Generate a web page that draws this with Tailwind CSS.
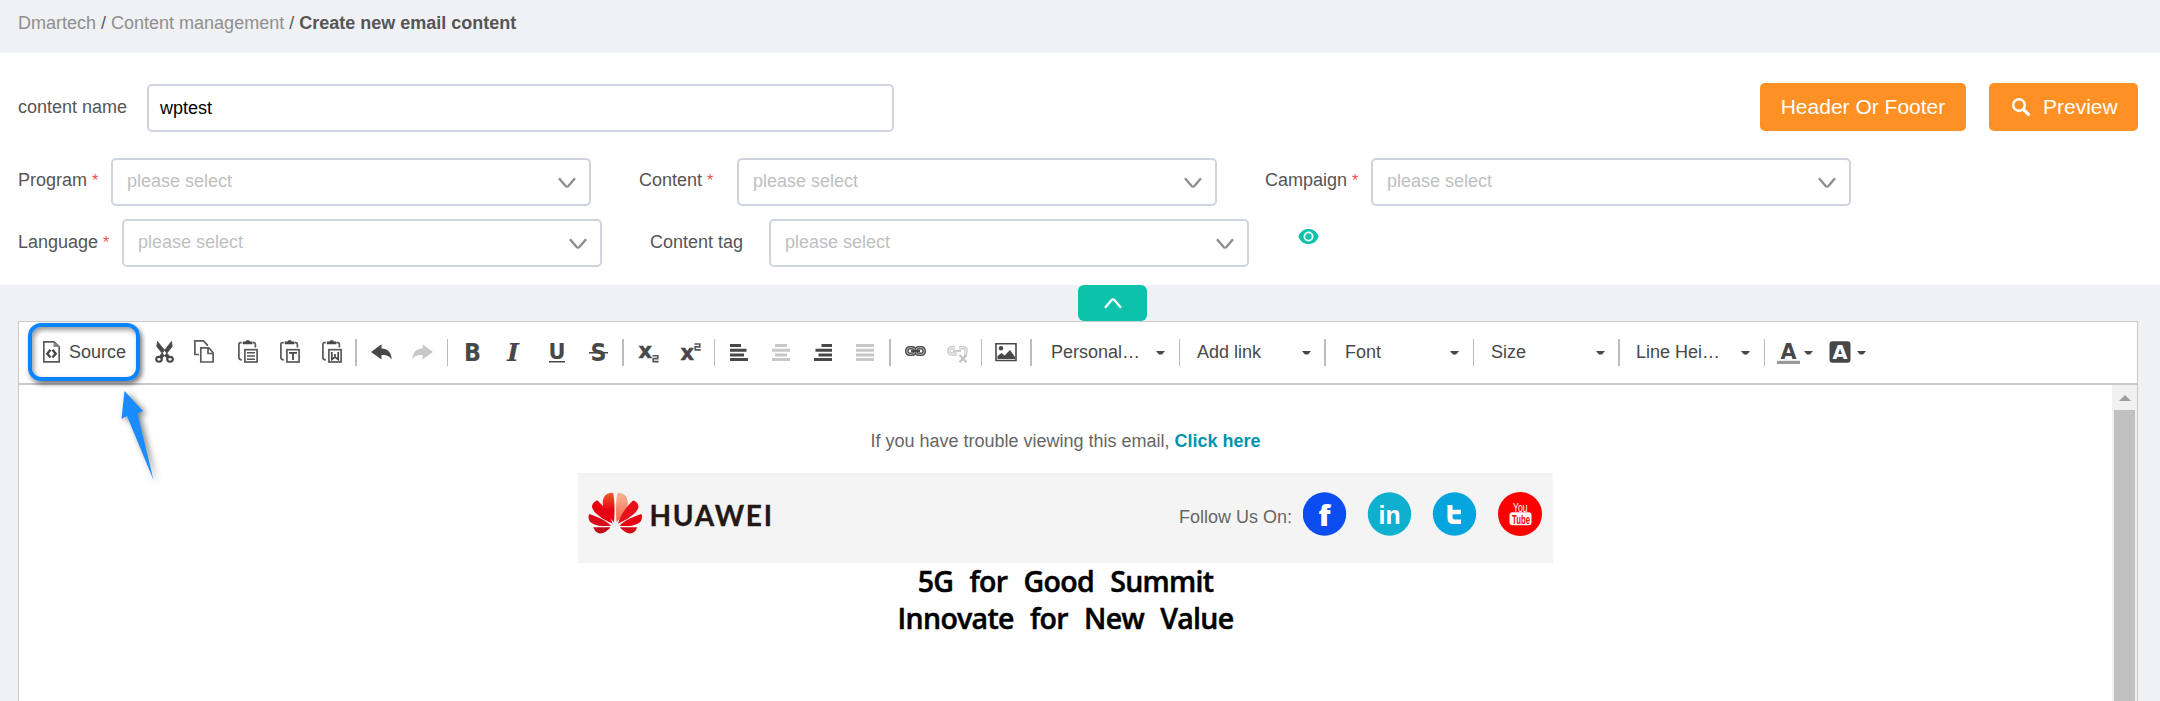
<!DOCTYPE html>
<html lang="en">
<head>
<meta charset="utf-8">
<title>Create new email content</title>
<script src="https://cdn.jsdelivr.net/npm/@tailwindcss/browser@4"></script>
</head>
<body class="relative h-[701px] w-[2160px] overflow-hidden bg-[#f0f1f5] font-['Liberation_Sans',Arial,sans-serif] text-[18px] leading-6 text-[#555]">
<svg class="hidden">
  <symbol id="chev" viewBox="0 0 18 11"><path d="M1 1.200 7.400 8.800Q9 10.600 10.600 8.800L17 1.200" fill="none" stroke="currentColor" stroke-width="2.300"/></symbol>
  <symbol id="tri" viewBox="0 0 9 24"><path d="M0 11h9L6 14.500H3z" fill="#484848"/></symbol>
  <symbol id="clip" viewBox="0 0 20 24"><g fill="none" stroke="#5a5a5a" stroke-width="1.700"><path d="M3.800 2.700H2.600Q.9 2.700.9 4.500V17.500Q.9 19.800 3.800 19.800M14.500 2.700h1.200Q17.400 2.700 17.400 4.500V7.500"/><rect x="6.900" y="9.700" width="12.200" height="12.300"/></g><path d="M4.800 4.300V1.500h2.700L8.500.2h2.500l1 1.300h2.300v2.800z" fill="#484848"/></symbol>
</svg>

<header class="h-[53px] pt-[11px] pl-[18px] whitespace-nowrap"><span class="text-[#8f8f8f]">Dmartech</span> / <span class="text-[#8f8f8f]">Content management</span> / <b>Create new email content</b></header>

<section class="h-[232px] bg-white pt-[30px] pr-[22px] pl-[18px]">
  <div class="flex h-[49px] items-start">
    <label class="mt-3 w-[129px]">content name</label>
    <div class="mt-px h-[48px] w-[747px] rounded-[5px] border-2 border-[#d0d4e0] pt-[10px] pl-[11px] text-black">wptest</div>
    <div class="ml-auto flex gap-[23px] text-[21px] text-white">
      <button class="h-[48px] w-[206px] rounded-[5px] bg-[#ff9124]">Header Or Footer</button>
      <button class="flex h-[48px] w-[149px] items-center rounded-[5px] bg-[#ff9124] pl-[22px]"><svg class="mr-[12px] h-5 w-5" viewBox="0 0 20 20" fill="none" stroke="white"><circle cx="8" cy="8" r="5.800" stroke-width="2.400"/><path d="m12.500 12.500 5 4.800" stroke-width="3.200" stroke-linecap="round"/></svg>Preview</button>
    </div>
  </div>
  <div class="mt-[26px] flex h-[48px]">
    <label class="w-[93px] pt-[10px]">Program <sup class="relative top-0 align-baseline text-[16px] leading-none text-[#f0524a]">*</sup></label>
    <div class="flex w-[480px] items-center justify-between rounded-[5px] border-2 border-[#d0d4e0] pr-[13px] pb-[2px] pl-[14px] text-[#bfbfbf]">please select<svg class="relative top-px h-[11px] w-[18px] text-[#8c8c8c]"><use href="#chev"/></svg></div>
    <label class="ml-[48px] w-[98px] pt-[10px]">Content <sup class="relative top-0 align-baseline text-[16px] leading-none text-[#f0524a]">*</sup></label>
    <div class="flex w-[480px] items-center justify-between rounded-[5px] border-2 border-[#d0d4e0] pr-[13px] pb-[2px] pl-[14px] text-[#bfbfbf]">please select<svg class="relative top-px h-[11px] w-[18px] text-[#8c8c8c]"><use href="#chev"/></svg></div>
    <label class="ml-[48px] w-[106px] pt-[10px]">Campaign <sup class="relative top-0 align-baseline text-[16px] leading-none text-[#f0524a]">*</sup></label>
    <div class="flex w-[480px] items-center justify-between rounded-[5px] border-2 border-[#d0d4e0] pr-[13px] pb-[2px] pl-[14px] text-[#bfbfbf]">please select<svg class="relative top-px h-[11px] w-[18px] text-[#8c8c8c]"><use href="#chev"/></svg></div>
  </div>
  <div class="mt-[13px] flex h-[48px]">
    <label class="w-[104px] pt-[11px]">Language <sup class="relative top-0 align-baseline text-[16px] leading-none text-[#f0524a]">*</sup></label>
    <div class="flex w-[480px] items-center justify-between rounded-[5px] border-2 border-[#d0d4e0] pr-[13px] pb-[2px] pl-[14px] text-[#bfbfbf]">please select<svg class="relative top-px h-[11px] w-[18px] text-[#8c8c8c]"><use href="#chev"/></svg></div>
    <label class="ml-[48px] w-[119px] pt-[11px]">Content tag</label>
    <div class="flex w-[480px] items-center justify-between rounded-[5px] border-2 border-[#d0d4e0] pr-[13px] pb-[2px] pl-[14px] text-[#bfbfbf]">please select<svg class="relative top-px h-[11px] w-[18px] text-[#8c8c8c]"><use href="#chev"/></svg></div>
    <svg class="mt-[10px] ml-[49px] h-[15px] w-[21px]" viewBox="0 0 21 15"><path d="M.5 7.500C2 2.500 6 0 10.500 0s8.500 2.500 10 7.500C19 12.500 15 15 10.500 15S2 12.500.5 7.500" fill="#0dc2aa"/><circle cx="10.500" cy="7.500" r="4.100" fill="none" stroke="white" stroke-width="1.800"/></svg>
  </div>
</section>

<div class="flex h-[36px] pl-[1078px]"><button class="flex w-[69px] items-center justify-center rounded-[6px] bg-[#0dc2aa] text-white"><svg class="h-[11px] w-[18px] rotate-180"><use href="#chev"/></svg></button></div>

<main class="ml-[18px] h-[400px] w-[2120px] border border-[#c9c9c9] bg-white">
  <div class="flex h-[63px] items-start border-b-2 border-[#c9c9c9] pt-[18px] whitespace-nowrap text-[#484848]">
    <svg class="ml-[24px] h-6 w-[17px] shrink-0" viewBox="0 0 17 24"><path d="M.8 1.900H11L16.200 7V21.900H.8z" fill="none" stroke="#5a5a5a" stroke-width="1.700"/><path d="M10.500 1.500v5.500h6z" fill="#888"/><path d="M7.500 9.800 4.300 13.700l3.200 3.900M9.500 9.800l3.200 3.900-3.200 3.900" fill="none" stroke="#484848" stroke-width="2.400"/></svg>
    <span class="ml-[9px] w-[57px]">Source</span>
    <svg class="ml-[29px] h-6 w-[19px] shrink-0" viewBox="0 0 19 24"><path d="M2.500 1.500 1.800 6.500l6 7.500L12.500 18.500l2.500-1.500L8.500 9zM16.500 1.500l.7 5-6 7.500L6.500 18.500 4 17l6.500-8z" fill="#484848" stroke="#484848" stroke-width=".8"/><g fill="none" stroke="#484848" stroke-width="2.100"><ellipse cx="4" cy="19.300" rx="2.800" ry="2.400"/><ellipse cx="15" cy="19.300" rx="2.800" ry="2.400"/></g></svg>
    <svg class="ml-[20px] h-6 w-[20px] shrink-0" viewBox="0 0 20 24" fill="none" stroke="#5a5a5a" stroke-width="1.700"><path d="M5 14.500H.9V.9H9.500l3.700 4v1"/><path d="M6.800 7.800h8l4.300 5v9.200H6.800zM14 8v5.500h5"/></svg>
    <svg class="ml-[24px] h-6 w-[20px] shrink-0"><use href="#clip"/><path d="M9 12.800h8M9 16h8M9 19.200h8" stroke="#555" stroke-width="1.500"/></svg>
    <svg class="ml-[22px] h-6 w-[20px] shrink-0"><use href="#clip"/><path d="M9 12.900h8M13 12.500v7.500" stroke="#484848" stroke-width="1.800"/></svg>
    <svg class="ml-[22px] h-6 w-[20px] shrink-0"><use href="#clip"/><path d="M9.800 12v7.500l3.200-2.500 3.200 2.500V12M13 14v3" fill="none" stroke="#484848" stroke-width="1.700"/></svg>
    <i class="mt-[-1px] ml-[13px] h-[27px] w-[2px] bg-[#bcbcbc]"></i>
    <svg class="ml-[14px] h-6 w-[21px] shrink-0" viewBox="0 0 21 24"><path d="M0 12 10.500 4.200V8.500C17 8.500 20.500 13 20.800 19.500 18 15.500 15 14.800 10.500 15v4.500z" fill="#484848"/></svg>
    <svg class="ml-[20px] h-6 w-[21px] shrink-0" viewBox="0 0 21 24"><path d="M21 12 10.500 4.200V8.500C4 8.500.5 13 .2 19.500 3 15.500 6 14.800 10.500 15v4.500z" fill="#c8c8c8"/></svg>
    <i class="mt-[-1px] ml-[14px] h-[27px] w-px bg-[#bcbcbc]"></i>
    <svg class="ml-[17px] h-6 w-[15px] shrink-0 overflow-visible" fill="#484848"><text x="-1" y="21" textLength="17" lengthAdjust="spacingAndGlyphs" font-family="DejaVu Sans" font-weight="700" font-size="24.500">B</text></svg>
    <svg class="ml-[27px] h-6 w-[13px] shrink-0 overflow-visible" fill="#484848"><text x="0" y="21" textLength="12" lengthAdjust="spacingAndGlyphs" font-family="DejaVu Serif" font-weight="700" font-style="italic" font-size="24.500">I</text></svg>
    <svg class="ml-[29px] h-6 w-[16px] shrink-0 overflow-visible" fill="#484848"><text x="-.5" y="18.800" textLength="17" lengthAdjust="spacingAndGlyphs" font-family="DejaVu Sans" font-weight="700" font-size="21.500">U</text><path d="M0 21h16v1.500H0z"/></svg>
    <svg class="ml-[24px] h-6 w-[19px] shrink-0 overflow-visible" fill="#484848"><text x="1.500" y="21" textLength="16" lengthAdjust="spacingAndGlyphs" font-family="DejaVu Sans" font-weight="700" font-size="24">S</text><path d="M0 12h19v1.500H0z"/></svg>
    <i class="mt-[-1px] ml-[14px] h-[27px] w-[2px] bg-[#bcbcbc]"></i>
    <svg class="ml-[15px] h-6 w-[20px] shrink-0 overflow-visible" fill="#484848"><text x="-.5" y="18" font-family="DejaVu Sans" font-weight="700" font-size="22" textLength="13.500" lengthAdjust="spacingAndGlyphs" stroke="#484848" stroke-width=".5">x</text><path d="M13.500 15.700h5.300v2.900h-4.600v3h5.500" fill="none" stroke="#555" stroke-width="1.600"/></svg>
    <svg class="ml-[22px] h-6 w-[20px] shrink-0 overflow-visible" fill="#484848"><text x="-.5" y="20" font-family="DejaVu Sans" font-weight="700" font-size="22" textLength="13.500" lengthAdjust="spacingAndGlyphs" stroke="#484848" stroke-width=".5">x</text><path d="M13.500 4h5.300v2.900h-4.600v3h5.500" fill="none" stroke="#555" stroke-width="1.600"/></svg>
    <i class="mt-[-1px] ml-[13px] h-[27px] w-px bg-[#bcbcbc]"></i>
    <svg class="ml-[15px] h-6 w-[18px] shrink-0" stroke="#484848" stroke-width="3"><path d="M0 5.500h11M0 10.200h16.500M0 14.900h14M0 19.600h18"/></svg>
    <svg class="ml-[24px] h-6 w-[18px] shrink-0" stroke="#c8c8c8" stroke-width="3"><path d="M3 5.500h12M0 10.200h18M3 14.900h12M0 19.600h18"/></svg>
    <svg class="ml-[24px] h-6 w-[18px] shrink-0" stroke="#484848" stroke-width="3"><path d="M7.500 5.500h11M1.500 10.200h17M4.500 14.900h14M0 19.600h18"/></svg>
    <svg class="ml-[24px] h-6 w-[18px] shrink-0" stroke="#c8c8c8" stroke-width="3"><path d="M0 5.500h18M0 10.200h18M0 14.900h18M0 19.600h18"/></svg>
    <i class="mt-[-1px] ml-[15px] h-[27px] w-[2px] bg-[#bcbcbc]"></i>
    <svg class="ml-[14px] h-6 w-[21px] shrink-0" fill="none"><g stroke="#484848" stroke-width="3.600"><rect x="1.900" y="7.700" width="8" height="6.600" rx="2.500"/><rect x="11.100" y="7.700" width="8" height="6.600" rx="2.500"/></g><g stroke="#ccc" stroke-width=".9"><rect x="1.900" y="7.700" width="8" height="6.600" rx="2.500"/><rect x="11.100" y="7.700" width="8" height="6.600" rx="2.500"/></g><path d="M6 11h9" stroke="#484848" stroke-width="2.400"/></svg>
    <svg class="ml-[21px] h-6 w-[21px] shrink-0" fill="none"><g stroke="#ccc" stroke-width="3.400"><path d="M10 14H4.400Q1.900 14 1.900 11T4.400 7.700H8M12 7.700h4.600Q19.100 7.700 19.100 11T17 14"/></g><g stroke="#f5f5f5" stroke-width=".9"><path d="M10 14H4.400Q1.900 14 1.900 11T4.400 7.700H8M12 7.700h4.600Q19.100 7.700 19.100 11T17 14"/></g><path d="M6 11h8" stroke="#ccc" stroke-width="2"/><path d="m12.500 15 7 7.300M19.500 15l-7 7.300" stroke="#c2c2c2" stroke-width="2.200"/></svg>
    <i class="mt-[-1px] ml-[13px] h-[27px] w-px bg-[#bcbcbc]"></i>
    <svg class="ml-[13px] h-6 w-[22px] shrink-0" fill="#484848"><path d="M1 3.800h20v16.700H1z" fill="none" stroke="#484848" stroke-width="1.600"/><circle cx="6" cy="8.300" r="2.200"/><path d="M2.500 19v-3L6.500 13l3 2.500L15 10l5 7v2z"/></svg>
    <i class="mt-[-1px] ml-[13px] h-[27px] w-[2px] bg-[#bcbcbc]"></i>
    <span class="ml-[19px] w-[105px]">Personal…</span><svg class="h-6 w-[9px]"><use href="#tri"/></svg>
    <i class="mt-[-1px] ml-[14px] h-[27px] w-px bg-[#bcbcbc]"></i>
    <span class="ml-[17px] w-[105px]">Add link</span><svg class="h-6 w-[9px]"><use href="#tri"/></svg>
    <i class="mt-[-1px] ml-[13px] h-[27px] w-[2px] bg-[#bcbcbc]"></i>
    <span class="ml-[19px] w-[105px]">Font</span><svg class="h-6 w-[9px]"><use href="#tri"/></svg>
    <i class="mt-[-1px] ml-[14px] h-[27px] w-px bg-[#bcbcbc]"></i>
    <span class="ml-[17px] w-[105px]">Size</span><svg class="h-6 w-[9px]"><use href="#tri"/></svg>
    <i class="mt-[-1px] ml-[13px] h-[27px] w-[2px] bg-[#bcbcbc]"></i>
    <span class="ml-[16px] w-[105px]">Line Hei…</span><svg class="h-6 w-[9px]"><use href="#tri"/></svg>
    <i class="mt-[-1px] ml-[14px] h-[27px] w-px bg-[#bcbcbc]"></i>
    <svg class="ml-[12px] h-6 w-[23px] shrink-0"><text x="3.500" y="18.500" font-family="DejaVu Sans" font-weight="700" font-size="22" textLength="16" lengthAdjust="spacingAndGlyphs" fill="#484848">A</text><path d="M0 20.800h23V24H0z" fill="#999"/></svg>
    <svg class="ml-[4px] h-6 w-[9px]"><use href="#tri"/></svg>
    <svg class="ml-[16px] h-6 w-[22px] shrink-0"><rect x=".5" y="1.300" width="21" height="21.500" rx="3" fill="#484848"/><text x="3.500" y="19" font-family="DejaVu Sans" font-weight="700" font-size="20" textLength="15" lengthAdjust="spacingAndGlyphs" fill="white">A</text></svg>
    <svg class="ml-[6px] h-6 w-[9px]"><use href="#tri"/></svg>
  </div>
  <div class="flex h-[340px]">
    <article class="w-[2093px] text-[#666]">
      <p class="mt-[44px] text-center">If you have trouble viewing this email, <b class="text-[#0093ad]">Click here</b></p>
      <div class="mt-[20px] ml-[559px] flex h-[90px] w-[975px] bg-[#f4f4f4] pt-[19px] pl-[10px]">
        <svg class="h-[44px] w-[190px]" viewBox="0 0 190 44">
          <defs><linearGradient id="hw" x1="0" y1="0" x2="0" y2="1"><stop offset="0" stop-color="#f05a2c"/><stop offset=".6" stop-color="#e60012"/></linearGradient><linearGradient id="hl" x1="0" y1="0" x2="0" y2="1"><stop offset="0" stop-color="#f8b596"/><stop offset="1" stop-color="#ef6a4a"/></linearGradient></defs>
          <g><path d="M26 30C18 23 13.500 16 15 8 16.500 2 21 .8 25 .8 26.800 9 26.800 20 26 30z" fill="url(#hw)"/><path d="M24.500 31.500C13 27 1.500 18 4.500 12.500 6 9.500 8 8.500 9.500 8.500 16.500 15 22 23 24.500 31.500z" fill="#e60012"/><path d="M23 33.700C12 35 2 33 .8 27 .2 25 .6 23 1.300 22 9 24.500 18 28.500 23 33.700z" fill="#d80c18"/><path d="M22.500 35.200H5.200Q6.500 39 9.500 40.800C14 43 19.500 39 22.500 35.200z" fill="#c00d1a"/></g>
          <g transform="matrix(-1 0 0 1 54.500 0)"><path d="M26 30C18 23 13.500 16 15 8 16.500 2 21 .8 25 .8 26.800 9 26.800 20 26 30z" fill="url(#hl)"/><path d="M24.500 31.500C13 27 1.500 18 4.500 12.500 6 9.500 8 8.500 9.500 8.500 16.500 15 22 23 24.500 31.500z" fill="#e8101a"/><path d="M23 33.700C12 35 2 33 .8 27 .2 25 .6 23 1.300 22 9 24.500 18 28.500 23 33.700z" fill="#e60012"/><path d="M22.500 35.200H5.200Q6.500 39 9.500 40.800C14 43 19.500 39 22.500 35.200z" fill="#cf0c18"/></g>
          <text x="61.500" y="34.300" font-family="Lato" font-weight="700" font-size="28" textLength="122.500" lengthAdjust="spacing" stroke="#231815" stroke-width=".3" fill="#231815">HUAWEI</text>
        </svg>
        <span class="mt-[13px] ml-[401px] w-[124px]">Follow Us On:</span>
        <svg class="h-[44px] w-[240px]" viewBox="0 0 240 44" font-family="Open Sans" font-weight="800" fill="white">
          <circle cx="21.500" cy="22" r="21.700" fill="#0b4df0"/><text x="15.500" y="33.500" font-size="28" textLength="12" lengthAdjust="spacingAndGlyphs">f</text>
          <circle cx="86.500" cy="22" r="21.700" fill="#0fb0cf"/><text x="75.500" y="32" font-family="Liberation Sans" font-weight="700" font-size="25" textLength="22" lengthAdjust="spacingAndGlyphs">in</text>
          <circle cx="151.500" cy="22" r="21.700" fill="#04a5de"/><path d="M144.500 13h5v4.800h8.500v4.500h-8.500v3q0 2.200 2.200 2.200h6.300v4.500h-7.500q-6 0-6-6z"/>
          <circle cx="217" cy="22" r="22" fill="#fe0000"/><text x="210" y="19.500" font-family="Liberation Sans" font-weight="400" font-size="13.500" textLength="14.500" lengthAdjust="spacingAndGlyphs">You</text><rect x="206.500" y="20.300" width="22" height="13" rx="3"/><text x="209" y="31.500" font-family="Liberation Sans" font-weight="700" font-size="12.500" textLength="18" lengthAdjust="spacingAndGlyphs" fill="#fe0000">Tube</text>
        </svg>
      </div>
      <h1 class="text-center font-['Open_Sans','Noto_Sans',sans-serif] text-[28.5px] leading-[37px] font-semibold tracking-[-0.7px] text-black [-webkit-text-stroke:0.5px_black] [word-spacing:9.5px]">5G for Good Summit<br>Innovate for New Value</h1>
    </article>
    <aside class="flex w-[25px] flex-col items-center bg-[#f1f1f1]"><svg class="mt-[10px] h-[6px] w-[12px]"><path d="M0 6 6 0l6 6z" fill="#a0a0a0"/></svg><i class="mt-[9px] w-[21px] grow bg-[#c1c1c1]"></i></aside>
  </div>
</main>

<div class="absolute top-[323px] left-[28px] h-[58px] w-[112px] rounded-[13px] border-4 border-[#0a84ff] shadow-[2px_3px_5px_rgba(0,0,0,.55),inset_2px_3px_5px_rgba(0,0,0,.4)]"></div>
<svg class="absolute top-[385px] left-[110px] h-[105px] w-[60px] drop-shadow-[3px_2px_3px_rgba(0,0,0,.5)]" viewBox="110 385 60 105"><path d="M124.500 391 143 411 137.500 413.500 153.500 480 127 416 121.500 419z" fill="#1a8cff"/></svg>
</body>
</html>
